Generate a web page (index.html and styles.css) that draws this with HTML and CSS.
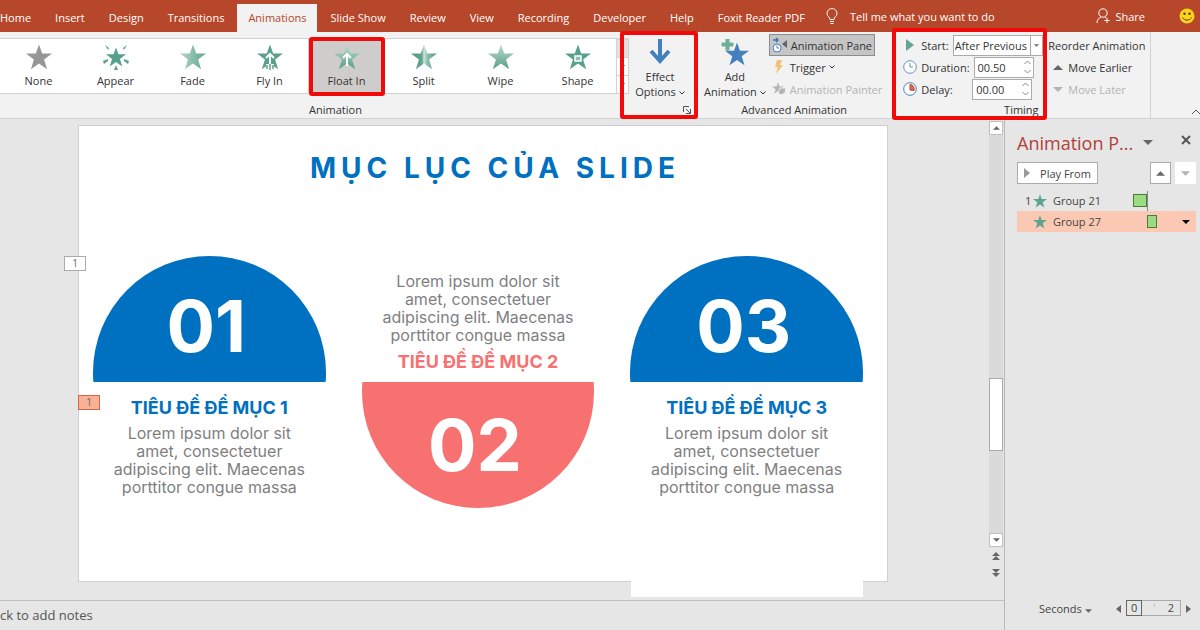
FILE: index.html
```html
<!DOCTYPE html>
<html lang="en">
<head>
    <meta charset="UTF-8">
    <meta name="viewport" content="width=device-width, initial-scale=1.0">
    <title>Animations</title>
    <link rel="stylesheet" href="styles.css">
</head>
<body>
    <!-- shared shapes -->
    <svg class="defs" aria-hidden="true">
        <defs>
            <linearGradient id="fade"><stop offset="0" stop-color="#b5d6cb"/><stop offset="1" stop-color="#5fa48e"/></linearGradient>
            <linearGradient id="wipe" x2="0" y2="1"><stop offset="0" stop-color="#bcdcd1"/><stop offset="1" stop-color="#579f88"/></linearGradient>
            <linearGradient id="split"><stop offset="0" stop-color="#4f9a83"/><stop offset=".42" stop-color="#5fa48e"/><stop offset=".5" stop-color="#d2e6df"/><stop offset=".62" stop-color="#8fbfaf"/><stop offset="1" stop-color="#4f9a83"/></linearGradient>
            <symbol id="star" viewBox="0 0 26 26"><path d="M13 0.500l3.200 9H26l-7.900 6 3 9.700L13 19.400l-8.100 5.800 3-9.700L0 9.500h9.800z"/></symbol>
            <symbol id="chevron" viewBox="0 0 6 4"><path d="M.5.5L3 3 5.500.5" fill="none" stroke="currentColor"/></symbol>
            <symbol id="up" viewBox="0 0 10 5"><path d="M0 5l5-5 5 5z"/></symbol>
            <symbol id="down" viewBox="0 0 10 5"><path d="M0 0l5 5 5-5z"/></symbol>
        </defs>
    </svg>

    <!-- tabs -->
    <header class="tabbar">
        <nav class="tabs">
            <a href="#">Home</a>
            <a href="#">Insert</a>
            <a href="#">Design</a>
            <a href="#">Transitions</a>
            <a href="#" class="active">Animations</a>
            <a href="#">Slide Show</a>
            <a href="#">Review</a>
            <a href="#">View</a>
            <a href="#">Recording</a>
            <a href="#">Developer</a>
            <a href="#">Help</a>
            <a href="#">Foxit Reader PDF</a>
        </nav>
        <button class="tell-me">
            <svg width="12" height="17" viewBox="0 0 12 17" fill="none" stroke="#fff"><path d="M4 11.500C4 9 1 8.500 1 5.500a5 5 0 0 1 10 0c0 3-3 3.500-3 6zM4 13.500h4M4.500 15.500h3"/></svg>
            Tell me what you want to do
        </button>
        <button class="share">
            <svg width="15" height="16" viewBox="0 0 15 16" fill="none" stroke="#fff"><circle cx="7" cy="5" r="4.200"/><path d="M1 15c0-3 1.500-5 4-6M9 9l1.500 1M11 10v5M8.500 12.500h5"/></svg>
            Share
        </button>
        <svg class="smile" width="16" height="16" viewBox="0 0 16 16"><circle cx="8" cy="8" r="7.500" fill="#ffd21c"/><circle cx="5.500" cy="5.800" r="1.200" fill="#4a3b10"/><circle cx="10.500" cy="5.800" r="1.200" fill="#4a3b10"/><path d="M3.500 9.500c2 3.500 7 3.500 9 0" fill="none" stroke="#4a3b10"/></svg>
    </header>

    <!-- ribbon -->
    <section class="ribbon">
        <div class="group animation">
            <div class="group-body">
                <div class="gallery">
                    <button class="effect"><svg class="star" fill="#969696"><use href="#star"/></svg>None</button>
                    <button class="effect">
                        <svg class="star" viewBox="0 0 26 26" fill="#58a08a"><use href="#star" x="3" y="3" width="20" height="20"/><path d="M2 1l4 3-1 2zM24 1l-4 3 1 2zM0 17l5-2v2l-4 3zM26 17l-5-2v2l4 3zM13 21l2 5h-4z"/></svg>
                        Appear
                    </button>
                    <button class="effect"><svg class="star" fill="url(#fade)"><use href="#star"/></svg>Fade</button>
                    <button class="effect">
                        <svg class="star" viewBox="0 0 26 26"><use href="#star" width="26" height="26" fill="#58a08a"/><path d="M13 10v11M9 14l4-4 4 4" fill="none" stroke="#fff" stroke-width="2"/><path d="M9 20h8v6H9z" fill="#fff"/><path d="M10 21v4M13 20v6M16 21v4" stroke="#58a08a" stroke-width="1.500"/></svg>
                        Fly In
                    </button>
                    <button class="effect selected marked">
                        <svg class="star" viewBox="0 0 26 26"><use href="#star" width="26" height="26" fill="url(#wipe)"/><path d="M13 10v12M9 14l4-4 4 4" fill="none" stroke="#fff" stroke-width="2"/></svg>
                        Float In
                    </button>
                    <button class="effect"><svg class="star" fill="url(#split)"><use href="#star"/></svg>Split</button>
                    <button class="effect"><svg class="star" fill="url(#wipe)"><use href="#star"/></svg>Wipe</button>
                    <button class="effect">
                        <svg class="star" viewBox="0 0 26 26"><use href="#star" width="26" height="26" fill="#58a08a"/><path d="M10 12h6v5h-6z" fill="#8fc0b0" stroke="#fff" stroke-width="1.500"/></svg>
                        Shape
                    </button>
                    <div class="gallery-scroll">
                        <button aria-label="Previous row"></button>
                        <button aria-label="Next row"><svg width="5" height="3"><use href="#down"/></svg></button>
                        <button aria-label="More"><svg width="5" height="3"><use href="#down"/></svg></button>
                    </div>
                </div>
            </div>
            <div class="group-title">Animation</div>
        </div>

        <div class="group options marked">
            <button class="big">
                <svg width="22" height="26" viewBox="0 0 22 26" fill="none" stroke="#4380bd" stroke-width="4"><path d="M11 0v23M2 12l9 10 9-10"/></svg>
                <span>Effect<br>Options <svg class="chev"><use href="#chevron"/></svg></span>
            </button>
            <button class="launcher" aria-label="More options"><svg width="8" height="8" viewBox="0 0 8 8" fill="none" stroke="#555"><path d="M.5 6V.5H6M3 3l4 4M7.500 3v4.500H3"/></svg></button>
        </div>

        <div class="group advanced">
            <div class="group-body">
                <button class="big">
                    <svg width="30" height="28" viewBox="0 0 30 28"><use href="#star" x="5" y="3" width="24" height="24" fill="#4380bd"/><path d="M6 0h3v4h4v3H9v4H6V7H2V4h4z" fill="#6fae98" stroke="#6fae98"/></svg>
                    <span>Add<br>Animation <svg class="chev"><use href="#chevron"/></svg></span>
                </button>
                <div class="rows">
                    <button class="pane-toggle">
                        <svg width="16" height="16" viewBox="0 0 16 16"><path d="M1 3h5M4 1l2 2-2 2" fill="none" stroke="#3b78b5" stroke-width="1.500"/><path d="M15 3v8l-5-4z" fill="#666"/><circle cx="5" cy="11" r="4" fill="#fff" stroke="#4380bd"/><path d="M5 8.500V11h2" fill="none" stroke="#4380bd"/></svg>
                        Animation Pane
                    </button>
                    <button>
                        <svg width="16" height="16" viewBox="0 0 16 16"><path d="M6 1h5L9 6h3L5 15l1.500-7H4z" fill="#f3c173"/></svg>
                        Trigger <svg class="chev"><use href="#chevron"/></svg>
                    </button>
                    <button disabled>
                        <svg width="16" height="16" viewBox="0 0 16 16" fill="#b3b3b3"><use href="#star" x="1" y="1" width="12" height="12"/><path d="M9 7l6 0-1 5-4 2-3-2z" stroke="#f2f2f2"/></svg>
                        Animation Painter
                    </button>
                </div>
            </div>
            <div class="group-title">Advanced Animation</div>
        </div>

        <div class="group timing">
            <div class="group-body">
                <div class="fields marked">
                    <div class="field">
                        <svg width="14" height="14" viewBox="0 0 14 14"><path d="M3 1l8 6-8 6z" fill="#63a58f"/></svg>
                        <label for="start">Start:</label>
                        <div class="select"><select id="start"><option>After Previous</option></select><svg width="5" height="3"><use href="#down"/></svg></div>
                    </div>
                    <div class="field">
                        <svg width="14" height="14" viewBox="0 0 14 14" fill="#fff" stroke="#5f93c6"><circle cx="7" cy="7" r="6.300"/><path d="M7 3v4h3"/></svg>
                        <label for="duration">Duration:</label>
                        <div class="spin"><input id="duration" value="00.50"><svg width="7" height="14" viewBox="0 0 7 14" fill="none" stroke="#888"><path d="M.5 4l3-3 3 3M.5 10l3 3 3-3"/></svg></div>
                    </div>
                    <div class="field">
                        <svg width="14" height="14" viewBox="0 0 14 14"><circle cx="7" cy="7" r="6.300" fill="#fff" stroke="#4380bd"/><path d="M7 2.500a4.500 4.500 0 0 1 4 6L7 8z" fill="#dc6a50" stroke="#b9482f"/></svg>
                        <label for="delay">Delay:</label>
                        <div class="spin"><input id="delay" value="00.00"><svg width="7" height="14" viewBox="0 0 7 14" fill="none" stroke="#888"><path d="M.5 4l3-3 3 3M.5 10l3 3 3-3"/></svg></div>
                    </div>
                </div>
                <div class="rows reorder">
                    <div class="row-title">Reorder Animation</div>
                    <button><svg width="10" height="5"><use href="#up"/></svg>Move Earlier</button>
                    <button disabled><svg width="10" height="5"><use href="#down"/></svg>Move Later</button>
                </div>
            </div>
            <div class="group-title">Timing</div>
        </div>
        <button class="collapse" aria-label="Collapse the ribbon"><svg width="10" height="6" viewBox="0 0 10 6" fill="none" stroke="#555"><path d="M1 5l4-4 4 4"/></svg></button>
    </section>

    <main class="main">
        <div class="editor">
            <div class="stage">
                <div class="slide-area">
                    <article class="slide">
                        <h1>MỤC LỤC CỦA SLIDE</h1>
                        <div class="columns">
                            <section class="card">
                                <div class="shape"><span>01</span></div>
                                <h2>TIÊU ĐỀ ĐỀ MỤC 1</h2>
                                <p>Lorem ipsum dolor sit<br>amet, consectetuer<br>adipiscing elit. Maecenas<br>porttitor congue massa</p>
                            </section>
                            <section class="card flipped">
                                <p>Lorem ipsum dolor sit<br>amet, consectetuer<br>adipiscing elit. Maecenas<br>porttitor congue massa</p>
                                <h2>TIÊU ĐỀ ĐỀ MỤC 2</h2>
                                <div class="shape"><span>02</span></div>
                            </section>
                            <section class="card">
                                <div class="shape"><span>03</span></div>
                                <h2>TIÊU ĐỀ ĐỀ MỤC 3</h2>
                                <p>Lorem ipsum dolor sit<br>amet, consectetuer<br>adipiscing elit. Maecenas<br>porttitor congue massa</p>
                            </section>
                        </div>
                        <span class="tag tag-first">1</span>
                        <span class="tag tag-second">1</span>
                        <div class="off-slide"></div>
                    </article>
                </div>
                <div class="scrollbar">
                    <button aria-label="Scroll up"><svg width="7" height="4"><use href="#up"/></svg></button>
                    <div class="track"><div class="thumb"></div></div>
                    <button aria-label="Scroll down"><svg width="7" height="4"><use href="#down"/></svg></button>
                    <button class="plain" aria-label="Previous slide"><svg width="8" height="8" viewBox="0 0 8 8"><path d="M0 4l4-4 4 4zM0 8l4-4 4 4z"/></svg></button>
                    <button class="plain" aria-label="Next slide"><svg width="8" height="8" viewBox="0 0 8 8"><path d="M0 0l4 4 4-4zM0 4l4 4 4-4z"/></svg></button>
                </div>
            </div>
            <input class="notes" aria-label="Notes" placeholder="ck to add notes">
        </div>

        <!-- animation pane -->
        <aside class="pane">
            <div class="pane-head">
                <h2>Animation P...</h2>
                <button aria-label="Pane options"><svg width="10" height="5"><use href="#down"/></svg></button>
                <button aria-label="Close"><svg width="10" height="10" viewBox="0 0 10 10" stroke="#555" stroke-width="2"><path d="M1 1l8 8M9 1L1 9"/></svg></button>
            </div>
            <div class="pane-tools">
                <button class="play"><svg width="6" height="10" viewBox="0 0 6 10"><path d="M0 0l6 5-6 5z" fill="#999"/></svg>Play From</button>
                <button class="move" aria-label="Move up"><svg width="9" height="5"><use href="#up"/></svg></button>
                <button class="move" aria-label="Move down" disabled><svg width="9" height="5"><use href="#down"/></svg></button>
            </div>
            <ul class="list">
                <li><span class="order">1</span><svg class="small-star"><use href="#star"/></svg><span class="name">Group 21</span><span class="bar"></span></li>
                <li class="current"><span class="order"></span><svg class="small-star"><use href="#star"/></svg><span class="name">Group 27</span><span class="bar short"></span><svg class="more" width="8" height="4"><use href="#down"/></svg></li>
            </ul>
            <div class="pane-foot">
                <button>Seconds <svg width="7" height="4"><use href="#down"/></svg></button>
                <div class="scale">
                    <button aria-label="Scroll left"><svg width="5" height="8" viewBox="0 0 5 8"><path d="M5 0L0 4l5 4z"/></svg></button>
                    <div class="ruler"><span class="zero">0</span><span class="tick">'</span><span class="two">2</span></div>
                    <button aria-label="Scroll right"><svg width="5" height="8" viewBox="0 0 5 8"><path d="M0 0l5 4-5 4z"/></svg></button>
                </div>
            </div>
        </aside>
    </main>
</body>
</html>
```
FILE: styles.css
```css
* {
    box-sizing: border-box;
}

body {
    display: flex;
    flex-direction: column;
    min-height: 100vh;
    margin: 0;
    overflow-x: hidden;
    font-family: "Open Sans", "Noto Sans", sans-serif;
    font-size: 11px;
    line-height: 15px;
    color: #444;
    background: #e6e6e6;
}

button,
input,
select {
    margin: 0;
    padding: 0;
    border: 0;
    border-radius: 0;
    background: none;
    font: inherit;
    color: inherit;
}

button {
    cursor: pointer;
}

button:disabled {
    color: #b3b3b3;
    cursor: default;
}

svg {
    flex: none;
}

.defs {
    position: absolute;
    width: 0;
    height: 0;
}

.chev {
    width: 6px;
    height: 4px;
    vertical-align: middle;
}

/* tabs */
.tabbar {
    display: flex;
    align-items: center;
    height: 32px;
    padding-right: 5px;
    background: #b7472a;
    color: #fff;
    white-space: nowrap;
}

.tabs {
    display: flex;
    align-self: flex-end;
    gap: 2px;
    margin-left: -11px;
}

.tabs a {
    padding: 6px 11px 7px;
    color: #fff;
    text-decoration: none;
}

.tabs .active {
    background: #f2f2f2;
    color: #b7472a;
}

.tell-me,
.share {
    display: flex;
    align-items: center;
    gap: 12px;
    margin-left: 10px;
}

.share {
    gap: 4px;
    margin-left: auto;
}

.smile {
    margin-left: 34px;
}

/* ribbon */
.ribbon {
    display: flex;
    position: relative;
    height: 87px;
    border-bottom: 1px solid #d2d2d2;
    background: #f2f2f2;
    color: #333;
    white-space: nowrap;
}

.group {
    display: flex;
    flex-direction: column;
    justify-content: space-between;
}

.group-body {
    display: flex;
}

.group-title {
    padding-bottom: 1px;
    text-align: center;
}

/* red frame round the steps to follow */
.marked {
    position: relative;
}

.marked::after {
    content: "";
    position: absolute;
    z-index: 2;
    inset: -2px;
    border: 4px solid #f00a0a;
    border-radius: 3px;
    pointer-events: none;
}

.gallery {
    display: flex;
    height: 56px;
    margin: 6px 0 0 -1px;
    border: 1px solid #d2d2d2;
    background: #fff;
}

.effect {
    display: flex;
    flex-direction: column;
    align-items: center;
    gap: 3px;
    width: 77px;
    padding-top: 5px;
}

.star {
    width: 26px;
    height: 26px;
}

.selected {
    background: #cfcdcc;
}

.selected.marked::after {
    inset: -2px 0 -3px 1px;
}

.gallery-scroll {
    display: flex;
    flex-direction: column;
    width: 12px;
    border-left: 1px solid #d2d2d2;
}

.gallery-scroll button {
    display: flex;
    flex: 1;
    align-items: center;
    justify-content: center;
    border-top: 1px solid #d2d2d2;
}

.gallery-scroll button:first-child {
    background: #e1e1e1;
}

.animation .group-title {
    padding-left: 42px;
}

.options {
    align-items: center;
    width: 68px;
    padding-right: 6px;
}

.options.marked::after {
    inset: -1px -1px -1px -9px;
}

.big {
    display: flex;
    flex-direction: column;
    align-items: center;
    gap: 4px;
    padding-top: 7px;
}

.launcher {
    align-self: flex-end;
    margin-bottom: 4px;
    line-height: 8px;
}

.advanced {
    margin-left: 7px;
}

.advanced .group-body {
    gap: 3px;
}

.advanced .big {
    gap: 2px;
}

.rows {
    display: flex;
    flex-direction: column;
    align-items: flex-start;
    padding-top: 2px;
}

.rows button,
.row-title {
    display: flex;
    align-items: center;
    gap: 3px;
    height: 22px;
    padding: 0 2px;
}

.rows .pane-toggle {
    border: 1px solid #8c8c8c;
    background: #c5c5c5;
}

/* timing */
.timing {
    margin-left: 13px;
    padding-right: 5px;
    border-right: 1px solid #d2d2d2;
}

.fields {
    display: flex;
    flex-direction: column;
    width: 143px;
    height: 84px;
    margin-bottom: -19px;
    padding-top: 2px;
    padding-left: 6px;
}

.fields.marked::after {
    inset: -4px -7px -4px -5px;
}

.field {
    display: flex;
    align-items: center;
    gap: 4px;
    height: 22px;
}

.select,
.spin {
    display: flex;
    align-items: center;
    height: 21px;
    margin-left: auto;
    border: 1px solid #ababab;
    background: #fff;
}

.select select {
    width: 76px;
    padding-left: 1px;
    appearance: none;
}

.select svg {
    box-sizing: content-box;
    padding: 8px 3px;
    border-left: 1px solid #ababab;
    fill: #666;
}

.spin {
    width: 60px;
    margin-right: 8px;
    padding: 0 3px;
}

.spin input {
    width: 46px;
}

.reorder {
    margin-left: 8px;
}

.reorder .row-title {
    padding: 0;
}

.reorder button {
    gap: 5px;
    padding-left: 5px;
    fill: #666;
}

.reorder button:disabled {
    fill: #b3b3b3;
}

.collapse {
    position: absolute;
    right: -1px;
    bottom: 3px;
    line-height: 6px;
}

/* editor */
.main {
    display: flex;
    flex: 1;
}

.editor {
    display: flex;
    flex: 1;
    flex-direction: column;
    min-width: 0;
}

.stage {
    display: flex;
    flex: 1;
}

.slide-area {
    flex: 1;
    padding: 6px 101px 18px 78px;
}

.slide {
    position: relative;
    border: 1px solid #cfcfcf;
    min-height: 457px;
    background: #fff;
    font-family: Inter, "Open Sans", sans-serif;
    text-align: center;
}

.slide h1 {
    margin: 0;
    padding: 25px 0 70px 24px;
    font-size: 28px;
    line-height: 35px;
    letter-spacing: 5px;
    color: #0070c0;
}

.columns {
    display: grid;
    grid-template-columns: repeat(3, 1fr);
    gap: 36px;
    padding: 0 24px 0 14px;
}

.card h2 {
    margin: 14px 0 4px;
    font-size: 18px;
    line-height: 24px;
    color: #0070c0;
}

.card p {
    margin: 0;
    font-size: 16px;
    line-height: 18px;
    color: #7f7f7f;
}

.shape {
    display: flex;
    position: relative;
    align-items: center;
    justify-content: center;
    height: 126px;
    padding: 14px 6px 0 0;
    overflow: hidden;
    font-size: 72px;
    font-weight: 700;
    line-height: 72px;
    color: #fff;
}

.shape::before {
    content: "";
    position: absolute;
    top: 0;
    left: 0;
    width: 100%;
    aspect-ratio: 1;
    border-radius: 50%;
    background: #0070c0;
}

.shape span {
    position: relative;
}

.flipped {
    padding-top: 16px;
}

.flipped h2 {
    margin: 6px 0 8px;
    color: #f87171;
}

.flipped .shape {
    padding-top: 0;
}

.flipped .shape::before {
    top: auto;
    bottom: 0;
    background: #f87171;
}

.tag {
    position: absolute;
    width: 22px;
    border: 1px solid #ababab;
    background: #fff;
    font-family: "Open Sans", sans-serif;
    font-size: 10px;
    line-height: 13px;
    color: #666;
}

.tag-first {
    top: 130px;
    left: -15px;
}

.tag-second {
    top: 269px;
    left: -1px;
    border-color: #d0694b;
    background: #f8b195;
}

.off-slide {
    position: absolute;
    right: 24px;
    bottom: -16px;
    width: 232px;
    height: 16px;
    background: #fff;
}

.scrollbar {
    display: flex;
    flex-direction: column;
    width: 14px;
    margin-right: 1px;
    padding: 2px 0 19px;
    fill: #666;
}

.scrollbar button {
    display: flex;
    align-items: center;
    justify-content: center;
    height: 14px;
    border: 1px solid #c0c0c0;
    background: #fff;
}

.scrollbar .plain {
    height: 17px;
    border: 0;
    background: none;
}

.track {
    display: flex;
    flex: 1;
    flex-direction: column;
    justify-content: flex-end;
    padding-bottom: 82px;
    background: #dadada;
}

.thumb {
    height: 73px;
    border: 1px solid #ababab;
    background: #fff;
}

.notes {
    height: 30px;
    padding-bottom: 2px;
    border-top: 1px solid #c0c0c0;
    font-size: 13px;
}

.notes::placeholder {
    color: #555;
    opacity: 1;
}

/* animation pane */
.pane {
    display: flex;
    flex-direction: column;
    width: 196px;
    padding: 11px 4px 14px 12px;
    border-left: 1px solid #b8b8b8;
}

.pane-head {
    display: flex;
    align-items: center;
}

.pane-head h2 {
    flex: 1;
    margin: 0;
    font-size: 18px;
    font-weight: 400;
    line-height: 26px;
    color: #b0403a;
    white-space: nowrap;
}

.pane-head button {
    width: 20px;
    margin-right: 18px;
    padding-bottom: 6px;
    fill: #666;
}

.pane-head button:last-child {
    margin-right: 0;
}

.pane-tools {
    display: flex;
    gap: 4px;
    margin: 6px 0;
}

.pane-tools button {
    display: flex;
    align-items: center;
    justify-content: center;
    height: 22px;
    border: 1px solid #ababab;
    background: #fff;
    fill: #666;
}

.pane-tools .play {
    gap: 10px;
    width: 81px;
    margin-right: auto;
}

.pane-tools .move {
    width: 21px;
}

.pane-tools .move:disabled {
    border-color: #fff;
    fill: #b3b3b3;
}

.list {
    margin: 0;
    padding: 0;
    list-style: none;
}

.list li {
    display: flex;
    align-items: center;
    height: 21px;
}

.list .current {
    background: #fbc9b3;
}

.order {
    width: 16px;
    padding-left: 8px;
}

.small-star {
    width: 14px;
    height: 14px;
    fill: #5fa48e;
}

.name {
    width: 80px;
    padding-left: 6px;
}

.bar {
    position: relative;
    width: 14px;
    height: 13px;
    margin-left: 6px;
    border: 1px solid #4f7a3a;
    background: #9bdb83;
}

.bar:not(.short)::after {
    content: "";
    position: absolute;
    top: -4px;
    right: -2px;
    height: 20px;
    border-right: 1px solid #888;
}

.short {
    width: 10px;
    margin-left: 20px;
}

.more {
    margin: 0 6px 0 auto;
}

.pane-foot {
    display: flex;
    align-items: center;
    justify-content: space-between;
    margin-top: auto;
    padding: 0 5px 0 22px;
    fill: #666;
}

.scale {
    display: flex;
    align-items: center;
    gap: 5px;
}

.ruler {
    display: flex;
    justify-content: space-between;
    width: 55px;
    border: 1px solid #ababab;
    line-height: 14px;
}

.zero {
    padding: 0 4px;
    outline: 1px solid #666;
}

.tick {
    color: #ababab;
}

.two {
    padding-right: 6px;
}
```
